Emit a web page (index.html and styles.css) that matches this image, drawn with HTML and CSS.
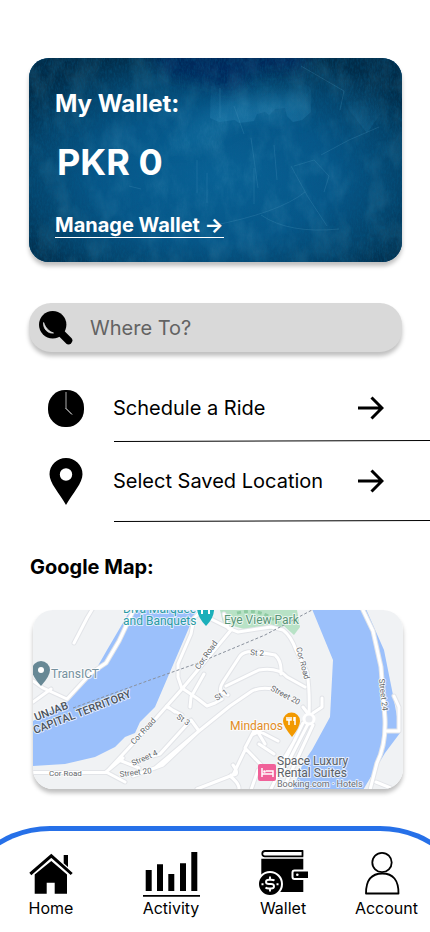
FILE: index.html
```html
<!DOCTYPE html>
<html lang="en">
<head>
<meta charset="utf-8">
<meta name="viewport" content="width=device-width, initial-scale=1">
<title>My Wallet</title>
<link rel="stylesheet" href="styles.css">
</head>
<body>
<main class="content">
  <section class="wallet">
    <svg class="wallet-texture" viewBox="0 0 373 204" preserveAspectRatio="none" aria-hidden="true">
      <defs>
        <radialGradient id="base" cx="0.5" cy="0.58" r="0.64">
          <stop offset="0" stop-color="#0a6296"/>
          <stop offset="0.5" stop-color="#075688"/>
          <stop offset="0.78" stop-color="#05446c"/>
          <stop offset="1" stop-color="#022c49"/>
        </radialGradient>
        <filter id="clouds" x="0" y="0" width="100%" height="100%">
          <feTurbulence type="fractalNoise" baseFrequency="0.05 0.03" numOctaves="5" seed="12"/>
          <feColorMatrix values="0 0 0 0 0.16  0 0 0 0 0.52  0 0 0 0 0.7  1.7 0 0 0 -0.68"/>
        </filter>
        <filter id="grain" x="0" y="0" width="100%" height="100%">
          <feTurbulence type="fractalNoise" baseFrequency="0.6 0.25" numOctaves="3" seed="3"/>
          <feColorMatrix values="0 0 0 0 0  0 0 0 0 0.12  0 0 0 0 0.28  1.4 0 0 0 -0.5"/>
        </filter>
        <filter id="soft" x="-30%" y="-50%" width="160%" height="200%"><feGaussianBlur stdDeviation="7"/></filter>
        <linearGradient id="fade" x1="0" y1="0" x2="0" y2="1">
          <stop offset="0.1" stop-color="#3c9ccb" stop-opacity="0"/>
          <stop offset="1" stop-color="#3c9ccb" stop-opacity="0.22"/>
        </linearGradient>
      </defs>
      <rect width="373" height="204" fill="url(#base)"/>
      <path d="M120-8H285L270 12 225 14 205 34 175 24 140 18Z" fill="#01265c" opacity="0.85" filter="url(#soft)"/>
      <path d="M135 92L165 60 195 44 270 38 278 62 210 66 170 90Z" fill="#2484b4" opacity="0.3" filter="url(#soft)"/>
      <rect width="373" height="204" filter="url(#clouds)" opacity="0.2"/>
      <rect width="373" height="204" filter="url(#grain)" opacity="0.45"/>
      <path d="M181 60L190 64 206 62 210 65 225 63 228 56 236 54 240 57 246 51 256 50 258 58 264 64 273 62 282 54V30L262 16 240 14 222 20 205 24 182 28Z" fill="url(#fade)"/>
      <path d="M306 14L340 22 352 55 338 75 320 52 314 34Z" fill="url(#fade)" opacity="0.6"/>
      <g fill="none" stroke="#5ba5c9" stroke-width="0.7" opacity="0.3">
        <path d="M262 108Q278 140 298 168M292 97L320 82 350 69M276 134Q250 155 181 168M232 157Q260 176 310 171M245 87L248 122M222 80L229 130M265 108L285 102 300 118 295 134M272 8L315 33 311 52"/>
        <path d="M191 30V60M178 115V145M168 102V135M205 48L215 76M225 110V146M100 128L112 131"/>
      </g>
    </svg>
    <h1 class="wallet-title">My Wallet:</h1>
    <p class="wallet-balance">PKR 0</p>
    <a class="wallet-link" href="#wallet">Manage Wallet →</a>
  </section>

  <form class="search" role="search">
    <label class="search-label" for="where" aria-label="Destination">
      <svg class="search-icon" viewBox="0 0 34 34" aria-hidden="true">
        <circle cx="13.7" cy="13.8" r="13.7"/>
        <path d="M21 21L29.5 29.5" stroke="#000" stroke-width="7.5" stroke-linecap="round"/>
        <path d="M4.600 11.500C4 18 9 22.800 14.500 22 10 20.500 6.500 17 4.600 11.500Z" fill="#d9d9d9" stroke="#d9d9d9" stroke-width="0.8" stroke-linejoin="round"/>
      </svg>
    </label>
    <input class="search-input" id="where" type="text" placeholder="Where To?">
  </form>

  <nav class="options" aria-label="Ride options">
    <a class="option" href="#schedule">
      <svg class="option-icon" viewBox="0 0 36 37" aria-hidden="true">
        <rect width="36" height="37" rx="17" ry="17.500"/>
        <path d="M18 2V19" fill="none" stroke="#aaa"/>
        <path d="M18 18.500L24 24.500" fill="none" stroke="#fff"/>
      </svg>
      <span>Schedule a Ride</span>
      <svg class="option-arrow" viewBox="0 0 26 24" aria-hidden="true"><path d="M0 12H24M13.500 1.500L24 12 13.500 22.500"/></svg>
    </a>
    <svg class="rule" aria-hidden="true"><line x1="0" y1="1.5" x2="100%" y2="0.5"/></svg>
    <a class="option option-tall" href="#saved">
      <svg class="option-icon" viewBox="0 0 36 47" aria-hidden="true">
        <path fill-rule="evenodd" d="M18 0A16.500 16.300 0 0 1 34.500 16.300C34.500 25 25 35 18 47 11 35 1.500 25 1.500 16.300A16.500 16.300 0 0 1 18 0ZM18 10.300A6.200 6.200 0 1 0 18 22.700 6.200 6.200 0 1 0 18 10.300Z"/>
      </svg>
      <span>Select Saved Location</span>
      <svg class="option-arrow" viewBox="0 0 26 24" aria-hidden="true"><path d="M0 12H24M13.500 1.500L24 12 13.500 22.500"/></svg>
    </a>
    <svg class="rule" aria-hidden="true"><line x1="0" y1="1.5" x2="100%" y2="0.5"/></svg>
  </nav>

  <section class="map-section">
    <h2 class="map-title">Google Map:</h2>
    <svg class="map" viewBox="0 0 370 179" preserveAspectRatio="xMidYMid slice" role="img" aria-label="Street map">
      <defs>
        <g id="roads">
          <path d="M60-2L54 8 41 33M102-3L86 31 73 53 58 63 34 89 10 78 0 71M18 79L0 92M0 162.500H73L117 115 149 79 198 20M73 162L90 148M86 150L106 158M75 163L92 172M174-4L161 8 158 24 145 54V67L149 79"/>
          <path d="M149 78L165 89 174 96 182 93 189 89M171 64L158 87 157 97M193 76L226 60Q245 57 254 67L272 77M188 82L195 85M188 82Q186 78 190 72L207 46Q212 40 225 42L242 45Q249 51 248 64"/>
          <path d="M134 96L142 102M158 110L166 121 122 158M100 166L130 155 166 121 197 96 219 81Q227 77 240 79M149 105L134 97M156 112L127 144 105 150M191 4L195 18 205 22 238 17 250 20Q258 26 263 40L274 62Q277 80 276 106M176 8L196 18M270 97L276 105M289 88V97L280 103"/>
          <path d="M245 131L222 119 212 138 233 160M223 119L232 134M226 134L241 144M238 115L219 125M212 140L200 165 164 179M198 165Q208 166 200 155M197 166Q212 178 202 184M225 160L218 180M270 113L238 179M276 112L248 166M280 115L252 175M262 130L250 150"/>
          <path d="M329-2L340 21 348 57 352 109Q353 135 344 153L337 180M361 86L366 97V121H353M343 172L370 183"/>
        </g>
      </defs>
      <rect width="370" height="180" fill="#f0f2f4"/>
      <path fill="#b8e2c6" d="M187 0H264L267 17 261 25 251 16 240 20 211 19 190 13Z"/>
      <path fill="none" stroke="#8ecba2" stroke-width="3" stroke-dasharray="4 3" d="M204 3Q227-3 245 13"/>
      <path fill="#9bc0fb" d="M98-1L74 40 62 61 35 91 0 111V156L32 154 62 147 82 137 92 127 102 123 107 112 122 97 137 62 155 20 164-1ZM279-1L300 50 297 107 279 140 270 153 260 180H330L342 160 352 143 367 123 360 85 351 40 333-1Z"/>
      <use href="#roads" class="road-edge"/>
      <use href="#roads" class="road"/>
      <path d="M40 98L117 70 165 53 232 25 279 0" fill="none" stroke="#89909c" stroke-dasharray="3 2"/>
      <circle cx="276" cy="109" r="5" fill="#e9ebef" stroke="#fff" stroke-width="3"/>

      <g class="place place-teal"><text x="90" y="3">Diva Marquee</text><text x="90" y="15">and Banquets</text></g>
      <path d="M173 16Q164 7 164-3H181Q182 7 173 16Z" fill="#1cafba"/><path d="M169 4V-2H176V4" fill="none" stroke="#fff" stroke-width="2"/>
      <text class="place place-green" x="191" y="14">Eye View Park</text>
      <path d="M8 76Q-1 66-1 60A9 9 0 0 1 17 60Q17 66 8 76Z" fill="#678895"/><circle cx="8" cy="60" r="3" fill="#fff"/>
      <text class="place place-slate" x="18" y="68">TransICT</text>
      <g class="region"><text transform="translate(3 111) rotate(-21)">UNJAB</text><text transform="translate(2 124) rotate(-21)">CAPITAL TERRITORY</text></g>
      <g class="street">
        <text x="16" y="166">Cor Road</text>
        <text transform="translate(101 135) rotate(-47)">Cor Road</text>
        <text transform="translate(166 60) rotate(-55)">Cor Road</text>
        <text transform="translate(263 38) rotate(75)">Cor Road</text>
        <text transform="translate(217 45) rotate(5)">St 2</text>
        <text transform="translate(184 91) rotate(-35)">St 1</text>
        <text transform="translate(143 108) rotate(35)">St 3</text>
        <text transform="translate(100 156) rotate(-24)">Street 4</text>
        <text transform="translate(87 167) rotate(-7)">Street 20</text>
        <text transform="translate(237 80) rotate(28)">Street 20</text>
        <text transform="translate(346 69) rotate(84)">Street 24</text>
      </g>
      <text class="place place-orange" x="197" y="120">Mindanos</text>
      <path d="M259 127Q250 116 250 111A8.500 8.500 0 0 1 267 111Q267 117 259 127Z" fill="#f29900"/>
      <path d="M256 107V115M254 107V110H258V107M262 107V115M261 107V111" fill="none" stroke="#fff" stroke-width="1.500"/>
      <g class="place place-dark"><text x="244" y="155">Space Luxury</text><text x="244" y="167">Rental Suites</text></g>
      <text class="place-note" x="244" y="177">Booking.com · Hotels</text>
      <rect x="225" y="154" width="18" height="17" rx="2" fill="#f06199"/>
      <path d="M229 158V167M229 164H240V167M233 161H240V164" fill="none" stroke="#fff" stroke-width="1.500"/><circle cx="231.500" cy="161.500" r="1.300" fill="#fff"/>
    </svg>
  </section>
</main>

<nav class="tabs" aria-label="Main">
  <a class="tab" href="#home">
    <svg class="tab-icon" width="44" height="47" viewBox="0 0 44 47" aria-hidden="true">
      <path d="M1.300 24L22.300 5.800 42.700 24" fill="none" stroke="#000" stroke-width="3"/>
      <path d="M34.700 5H39V17L34.700 13.200ZM22.300 11L38 24.600V43.700H25.700V32.700H17.700V43.700H5.700V24.600Z"/>
    </svg>
    <span>Home</span>
  </a>
  <a class="tab" href="#activity">
    <svg class="tab-icon" width="57" height="47" viewBox="0 0 57 47" aria-hidden="true">
      <path d="M2.700 20H8.700V41H2.700ZM14 14.300H20V41H14ZM25.300 24H31.300V41H25.300ZM37 13.300H43V41H37ZM48.300 2H54.300V41H48.300ZM0 45H57V46.800H0Z"/>
    </svg>
    <span>Activity</span>
  </a>
  <a class="tab" href="#wallet">
    <svg class="tab-icon" width="49" height="47" viewBox="0 0 49 47" aria-hidden="true">
      <path d="M44.300 1H6Q3.300 1 3.300 3.700T6 6.300H44.300M43.500 1V6.300" fill="none" stroke="#000" stroke-width="1.800"/>
      <path d="M2.300 8.700H44.300V42H2.300Z"/>
      <path d="M50 20.500H35.500Q33.500 20.500 33.500 22.500V27Q33.500 29 35.500 29H50" fill="#000" stroke="#fff" stroke-width="2"/>
      <circle cx="38.300" cy="24.700" r="1.300" fill="#fff"/>
      <circle cx="11" cy="34" r="12" stroke="#fff" stroke-width="2"/>
      <path d="M15.500 30.500Q14.500 29.700 12 29.700H10Q7 29.700 7 32 7 34 10 34H12Q15 34 15 36.200 15 38.500 12 38.500H10Q7.500 38.500 6.500 37.500M11 26.500V29.700M11 38.500V41.500" fill="none" stroke="#fff" stroke-width="1.900"/>
      <path d="M2.500 33.200H4.500V35.200H2.500ZM17.500 33.200H19.500V35.200H17.500Z" fill="#fff"/>
    </svg>
    <span>Wallet</span>
  </a>
  <a class="tab" href="#account">
    <svg class="tab-icon" width="53" height="47" viewBox="0 0 53 47" aria-hidden="true">
      <g fill="none" stroke="#000" stroke-width="1.800">
        <circle cx="17" cy="12.500" r="9.700"/>
        <path d="M1 43.500Q1 23.500 17.300 23.500T33.500 43.500Z" stroke-linejoin="round"/>
      </g>
    </svg>
    <span>Account</span>
  </a>
</nav>
</body>
</html>
```

FILE: styles.css
```css
* {
  box-sizing: border-box;
}

body {
  display: flex;
  flex-direction: column;
  min-height: 100vh;
  margin: 0;
  background: #fff;
  color: #000;
  font-family: Inter, "Liberation Sans", sans-serif;
  font-size: 20px;
  line-height: 24px;
}

a {
  color: inherit;
  text-decoration: none;
}

h1, h2, p {
  margin: 0;
}

svg {
  display: block;
}

.content {
  padding-top: 58px;
}

.wallet {
  position: relative;
  display: flex;
  flex-direction: column;
  align-items: flex-start;
  min-height: 204px;
  margin: 0 28px 0 29px;
  padding: 32px 26px 24px;
  overflow: hidden;
  border-radius: 20px;
  background: #07568a;
  box-shadow: 0 4px 4px rgba(0, 0, 0, 0.25);
  color: #fff;
  font-weight: 700;
}

.wallet-texture {
  position: absolute;
  inset: 0;
  width: 100%;
  height: 100%;
}

.wallet-title,
.wallet-balance,
.wallet-link {
  position: relative;
}

.wallet-title {
  font-size: 24px;
  line-height: 28px;
}

.wallet-balance {
  padding: 22px 2px 29px;
  font-size: 36px;
  line-height: 44px;
}

.wallet-link {
  border-bottom: 1px solid #fff;
  line-height: 24px;
}

.search {
  display: flex;
  align-items: center;
  height: 49px;
  margin: 41px 28px 0 29px;
  padding: 0 20px 0 10px;
  border-radius: 22px;
  background: #d9d9d9;
  box-shadow: 0 4px 4px rgba(0, 0, 0, 0.25);
}

.search-icon {
  width: 34px;
  height: 34px;
}

.search-input {
  flex: 1;
  min-width: 0;
  padding: 0 0 0 17px;
  border: 0;
  outline: 0;
  background: transparent;
  color: #000;
  font: inherit;
}

.search-input::placeholder {
  color: #636363;
  opacity: 1;
}

.options {
  margin-top: 24px;
}

.option {
  display: grid;
  grid-template-columns: 36px 1fr 26px;
  column-gap: 29px;
  align-items: center;
  min-height: 64px;
  padding: 0 46px 0 48px;
}

.option-tall {
  min-height: 78px;
}

.option-icon {
  width: 36px;
}

.option-arrow {
  width: 26px;
  fill: none;
  stroke: #000;
  stroke-width: 3px;
}

.rule {
  width: calc(100% - 114px);
  height: 2px;
  margin-left: 114px;
  stroke: #000;
}

.map-section {
  margin: 33px 27px 0 33px;
}

.map-title {
  margin: 0 0 31px -3px;
  font-size: 20px;
  font-weight: 700;
}

.map {
  width: 100%;
  border-radius: 20px;
  box-shadow: 0 4px 4px rgba(0, 0, 0, 0.25);
  font-family: Roboto, sans-serif;
}

.road,
.road-edge {
  fill: none;
  stroke: #fff;
  stroke-width: 3px;
  stroke-linejoin: round;
  stroke-linecap: round;
}

.road-edge {
  stroke: #e2e4e8;
  stroke-width: 5px;
}

.map text {
  paint-order: stroke;
  stroke: rgba(255, 255, 255, 0.7);
  stroke-width: 2px;
  stroke-linejoin: round;
}

.place {
  font-size: 12px;
}

.place-teal {
  fill: #2a9ba4;
}

.place-green {
  fill: #579476;
}

.place-slate {
  fill: #75919e;
}

.place-orange {
  fill: #e28c24;
}

.place-dark {
  fill: #5b6065;
}

.place-note {
  fill: #6b6f73;
  font-size: 9px;
}

.street {
  fill: #63676b;
  font-size: 8px;
}

.region {
  fill: #4d545d;
  font-size: 11px;
  font-weight: 500;
}

.tabs {
  position: relative;
  display: grid;
  grid-template-columns: 102fr 138fr 86fr 104fr;
  margin-top: auto;
  padding: 24px 0 13px;
  overflow: hidden;
  font-size: 16px;
  line-height: 22px;
}

.tabs::before {
  content: "";
  position: absolute;
  inset: 0 -50px;
  border: 5px solid #2670e8;
  border-bottom: 0;
  border-radius: 100px 100px 0 0;
  pointer-events: none;
}

.tab {
  display: flex;
  flex-direction: column;
  align-items: center;
}

.tab:last-child {
  align-items: flex-end;
  padding-right: 12px;
}
```
